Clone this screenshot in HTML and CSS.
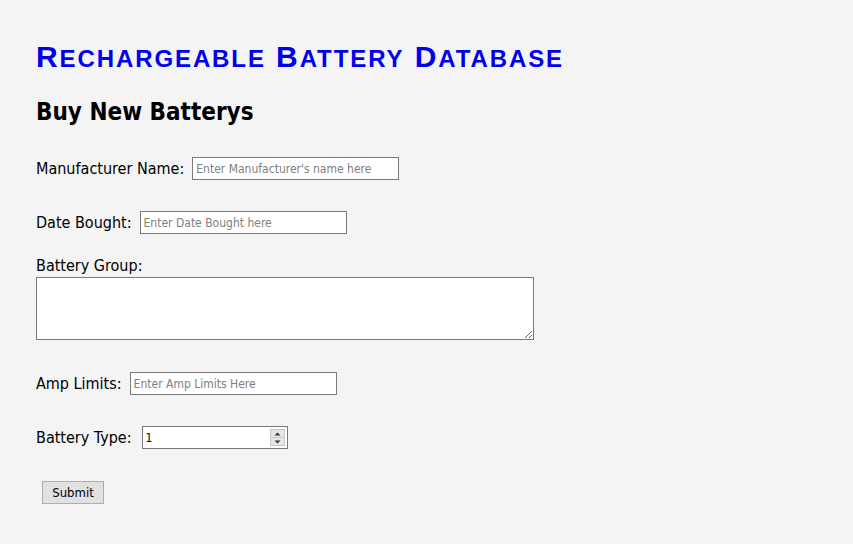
FILE: index.html
```html
<!DOCTYPE html>
<html lang="en">
<head>
<meta charset="utf-8">
<title>Rechargeable Battery Database</title>
<link rel="stylesheet" href="styles.css">
</head>
<body>
<main class="page">
  <h1 class="title"><span class="word"><span class="ini">R</span><span class="sc">echargeable</span></span> <span class="word"><span class="ini">B</span><span class="sc">attery</span></span> <span class="word"><span class="ini">D</span><span class="sc">atabase</span></span></h1>
  <h2 class="subtitle">Buy New Batterys</h2>
  <form class="form">
    <div class="row row-first">
      <label class="label" for="mfr">Manufacturer Name:</label>
      <input class="field" id="mfr" type="text" placeholder="Enter Manufacturer's name here">
    </div>
    <div class="row">
      <label class="label" for="date">Date Bought:</label>
      <input class="field" id="date" type="text" placeholder="Enter Date Bought here">
    </div>
    <div class="group">
      <label class="label" for="grp">Battery Group:</label>
      <textarea class="area" id="grp"></textarea>
    </div>
    <div class="row row-amp">
      <label class="label" for="amp">Amp Limits:</label>
      <input class="field" id="amp" type="text" placeholder="Enter Amp Limits Here">
    </div>
    <div class="row">
      <label class="label label-type" for="type">Battery Type:</label>
      <span class="num-wrap">
        <input class="field number" id="type" type="number" value="1">
        <span class="spin" aria-hidden="true">
          <span class="spin-btn"><svg width="7" height="4" viewBox="0 0 7 4"><path d="M0.5 3.5 L3.5 0.5 L6.5 3.5 Z" fill="#333"/></svg></span>
          <span class="spin-btn"><svg width="7" height="4" viewBox="0 0 7 4"><path d="M0.5 0.5 L3.5 3.5 L6.5 0.5 Z" fill="#333"/></svg></span>
        </span>
      </span>
    </div>
    <div class="actions">
      <button class="submit" type="submit">Submit</button>
    </div>
  </form>
</main>
</body>
</html>
```
FILE: styles.css
```css
html, body {
  margin: 0;
  padding: 0;
  background: #f4f4f4;
}
.page {
  padding: 39px 36px 0 36px;
  font-family: "DejaVu Sans Condensed", "DejaVu Sans", sans-serif;
  color: #000;
}
.title {
  margin: 0;
  height: 36px;
  font-family: "Liberation Sans", Arial, sans-serif;
  font-size: 30px;
  line-height: 36px;
  font-weight: bold;
  letter-spacing: 1.9px;
  color: #0000ee;
  white-space: nowrap;
}
.title .sc {
  font-size: 24px;
  line-height: 20px;
  text-transform: uppercase;
}
.subtitle {
  margin: 22px 0 0 0;
  font-size: 24px;
  line-height: 30px;
  font-weight: bold;
}
.form {
  display: flex;
  flex-direction: column;
  margin-top: 30px;
}
.row {
  display: flex;
  align-items: center;
  height: 23px;
  margin-top: 31px;
}
.row-first { margin-top: 0; }
.row-amp { margin-top: 32px; }
.label {
  font-size: 16px;
  line-height: 20px;
  margin-right: 8px;
}
.label-type { margin-right: 10px; }
.field {
  box-sizing: border-box;
  width: 207px;
  height: 23px;
  border: 1px solid #7a7a7a;
  background: #fff;
  padding: 1px 3px;
  font-family: "DejaVu Sans Condensed", "DejaVu Sans", sans-serif;
  font-size: 12px;
  color: #000;
  border-radius: 0;
  outline: none;
}
.field::placeholder { color: #808080; }
.num-wrap {
  position: relative;
  display: inline-block;
  height: 23px;
}
.number {
  width: 146px;
  appearance: textfield;
  -moz-appearance: textfield;
}
.number::-webkit-inner-spin-button,
.number::-webkit-outer-spin-button {
  -webkit-appearance: none;
  margin: 0;
}
.spin {
  position: absolute;
  top: 3px;
  right: 3px;
  width: 15px;
  height: 17px;
  display: flex;
  flex-direction: column;
  background: #e6e6e6;
  border: 1px solid #c8c8c8;
  box-sizing: border-box;
}
.spin-btn {
  flex: 1;
  display: flex;
  align-items: center;
  justify-content: center;
}
.spin-btn + .spin-btn { border-top: 1px solid #c8c8c8; }
.spin-btn svg { display: block; }
.group {
  display: flex;
  flex-direction: column;
  margin-top: 22px;
}
.group .label { margin: 0 0 1px 0; }
.area {
  box-sizing: border-box;
  width: 498px;
  height: 63px;
  border: 1px solid #7a7a7a;
  background: #fff;
  border-radius: 0;
  resize: both;
}
.actions {
  margin-top: 32px;
  padding-left: 6px;
}
.submit {
  box-sizing: border-box;
  width: 62px;
  height: 23px;
  border: 1px solid #adadad;
  background: #e1e1e1;
  font-family: "DejaVu Sans Condensed", "DejaVu Sans", sans-serif;
  font-size: 13px;
  color: #000;
  border-radius: 0;
  padding: 0;
}
```
